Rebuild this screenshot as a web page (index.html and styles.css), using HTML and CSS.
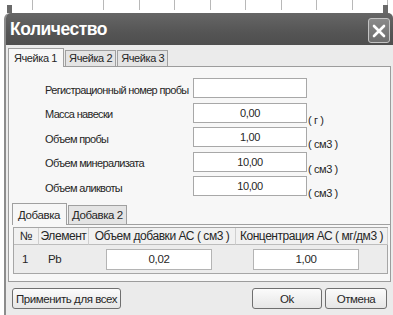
FILE: index.html
```html
<!DOCTYPE html>
<html lang="ru">
<head>
  <meta charset="UTF-8">
  <title>Количество</title>
  <link rel="stylesheet" href="styles.css">
</head>
<body>

<div class="ruler">
  <span class="mark"></span>
  <span class="mark"></span>
</div>

<div class="window">
  <div class="titlebar">
    <span class="title">Количество</span>
    <div class="close">
      <svg width="14" height="14" viewBox="0 0 14 14">
        <path d="M2 2 L12 12 M12 2 L2 12" stroke="#fff" stroke-width="2.6" stroke-linecap="round"/>
      </svg>
    </div>
  </div>

  <div class="content">
    <div class="tabs">
      <div class="tab active">Ячейка 1</div>
      <div class="tab">Ячейка 2</div>
      <div class="tab">Ячейка 3</div>
    </div>

    <div class="panel">
      <div class="form">
        <div class="label">Регистрационный номер пробы</div>
        <div class="field"></div>
        <div class="unit"></div>

        <div class="label">Масса навески</div>
        <div class="field">0,00</div>
        <div class="unit">( г )</div>

        <div class="label">Объем пробы</div>
        <div class="field">1,00</div>
        <div class="unit">( см3 )</div>

        <div class="label">Объем минерализата</div>
        <div class="field">10,00</div>
        <div class="unit">( см3 )</div>

        <div class="label">Объем аликвоты</div>
        <div class="field">10,00</div>
        <div class="unit">( см3 )</div>
      </div>

      <div class="subtabs">
        <div class="tab active">Добавка</div>
        <div class="tab">Добавка 2</div>
      </div>
      <div class="subpanel">
        <div class="grid">
          <div class="th">№</div>
          <div class="th">Элемент</div>
          <div class="th">Объем добавки АС ( см3 )</div>
          <div class="th">Концентрация АС ( мг/дм3 )</div>

          <div class="td">1</div>
          <div class="td">Pb</div>
          <div class="td"><div class="cell-input">0,02</div></div>
          <div class="td"><div class="cell-input">1,00</div></div>
        </div>
      </div>
    </div>

    <div class="buttons">
      <button class="btn">Применить для всех</button>
      <button class="btn ok">Ok</button>
      <button class="btn cancel">Отмена</button>
    </div>
  </div>
</div>

</body>
</html>
```

FILE: styles.css
```css
* {
  box-sizing: border-box;
  margin: 0;
  padding: 0;
}

body {
  background: #fff;
  font-family: 'Liberation Sans', Arial, sans-serif;
  font-size: 11px;
  letter-spacing: -0.4px;
  color: #262626;
  width: 393px;
  height: 315px;
  overflow: hidden;
}

.ruler {
  height: 13px;
  display: flex;
  justify-content: space-between;
  align-items: flex-end;
  padding: 0 5px 0 7px;
  background-image: repeating-linear-gradient(90deg, transparent 0 32px, #b8b8b8 32px 33px, transparent 33px 35.5px);
  background-size: 100% 10px;
  background-repeat: no-repeat;
}

.mark {
  width: 5px;
  height: 8px;
  background: #6a6a6a;
}

.window {
  margin-left: 4px;
  background: #ebebeb;
  border-left: 2px solid #8c8c8c;
  border-radius: 6px 6px 0 0;
  height: 302px;
}

.titlebar {
  height: 32px;
  display: flex;
  justify-content: space-between;
  align-items: center;
  padding: 0 3px 0 4px;
  background: linear-gradient(#666, #555 60%, #4e4e4e);
  border-radius: 5px 5px 0 0;
}

.title {
  color: #fff;
  font-size: 17.5px;
  font-weight: bold;
  letter-spacing: -0.5px;
  padding-top: 1px;
}

.close {
  width: 22px;
  height: 25px;
  margin-top: 3px;
  background: linear-gradient(#8a8a8a, #6e6e6e);
  border: 1px solid #c4c4c4;
  border-radius: 3px;
  display: flex;
  align-items: center;
  justify-content: center;
}

.content {
  padding: 3px 2px 0 2px;
}

.tabs, .subtabs {
  display: flex;
  align-items: flex-end;
  position: relative;
  z-index: 1;
}

.tab {
  height: 16px;
  line-height: 15px;
  padding: 0 3px;
  background: #e4e4e4;
  border: 1px solid #a0a0a0;
  border-bottom: none;
  margin-right: 1px;
  white-space: nowrap;
}

.tab.active {
  height: 19px;
  line-height: 18px;
  padding: 0 6px 0 5px;
  background: #f7f7f7;
  margin-bottom: -1px;
}

.panel {
  height: 216px;
  background: #f7f7f7;
  border: 1px solid #9c9c9c;
  padding: 11px 0 0 3px;
}

.form {
  display: grid;
  grid-template-columns: 148px 114px auto;
  grid-auto-rows: 20px;
  row-gap: 4.5px;
  margin-left: 33px;
}

.label {
  align-self: center;
  padding-top: 3px;
  white-space: nowrap;
  letter-spacing: -0.65px;
}

.field {
  background: #fff;
  border: 1px solid #a8a8a8;
  text-align: center;
  line-height: 18px;
}

.unit {
  align-self: end;
  line-height: 12px;
  margin-bottom: -3px;
  padding-left: 1px;
  white-space: nowrap;
}

.subtabs {
  margin-top: 7px;
}

.subtabs .tab {
  height: 19px;
  line-height: 19px;
  font-size: 11.5px;
}

.subtabs .tab.active {
  height: 22px;
  line-height: 22px;
}

.subpanel {
  border-top: 1px solid #a0a0a0;
  padding: 2px 0 0 1px;
}

.grid {
  display: grid;
  grid-template-columns: 25px 50px 147px 152px;
  grid-template-rows: 17px 28px;
  width: 375px;
  border: 1px solid #a6a6a6;
  background: #ececec;
}

.th {
  font-size: 12px;
  line-height: 16px;
  text-align: center;
  border-right: 1px solid #cfcfcf;
  border-bottom: 1px solid #bdbdbd;
  white-space: nowrap;
  overflow: hidden;
  background: #f1f1f1;
  letter-spacing: -0.45px;
}

.th:last-child {
  border-right: none;
}

.td {
  display: flex;
  align-items: center;
  padding-left: 8px;
  font-size: 11.5px;
}

.td:nth-child(6) {
  padding-left: 9px;
}

.td:nth-child(7), .td:nth-child(8) {
  padding-left: 17px;
}

.cell-input {
  width: 106px;
  height: 21px;
  line-height: 19px;
  background: #fff;
  border: 1px solid #b4b4b4;
  text-align: center;
}

.buttons {
  display: flex;
  gap: 3px;
  padding: 6px 4px 0 4px;
}

.btn {
  height: 21px;
  font-family: inherit;
  font-size: 11.5px;
  letter-spacing: -0.45px;
  color: #262626;
  padding: 0 3px;
  background: linear-gradient(#fbfbfb, #e6e6e6);
  border: 1px solid #6f6f6f;
  border-radius: 3px;
}

.ok {
  width: 70px;
  margin-left: auto;
}

.cancel {
  width: 62px;
}
```
